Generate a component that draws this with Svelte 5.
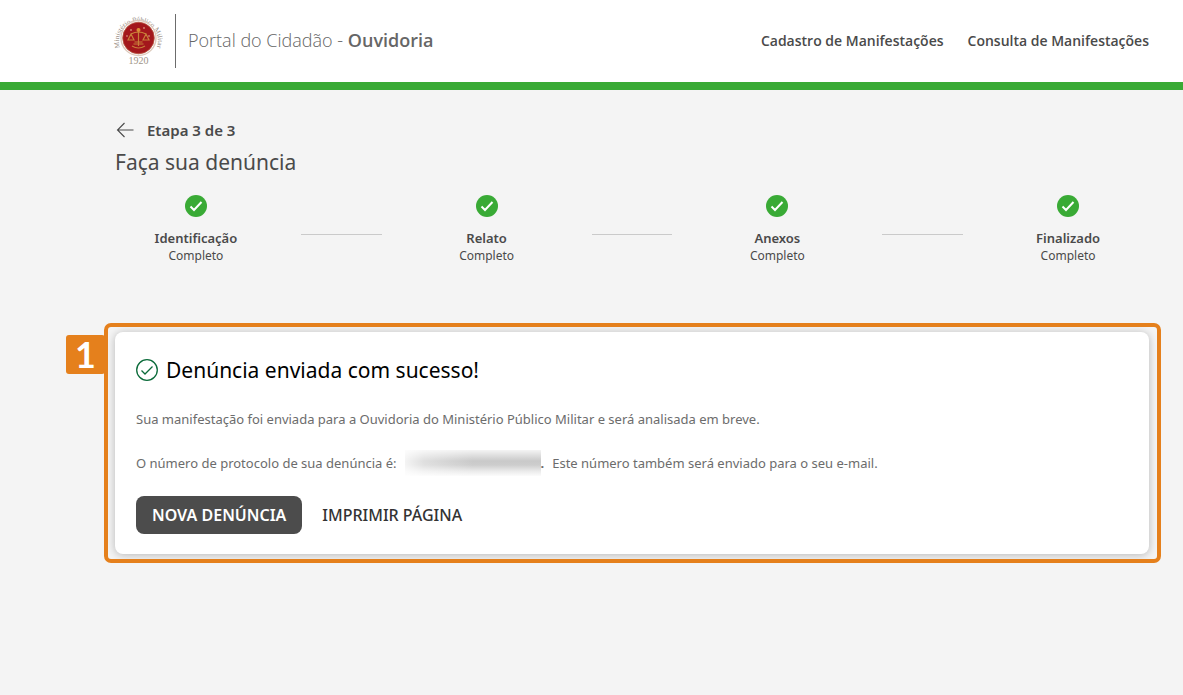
<script>
  const steps = ['Identificação', 'Relato', 'Anexos', 'Finalizado'];
  const status = 'Completo';
</script>

<header class="topbar">
  <a class="brand" href="#inicio">
    <svg class="logo" viewBox="0 0 48 54" aria-hidden="true">
      <defs>
        <path id="seal-arc" d="M5.8 35.5 A19.5 19.5 0 1 1 41.2 35.5" />
      </defs>
      <text class="seal-text"><textPath href="#seal-arc" startOffset="50%" text-anchor="middle">Ministério Público Militar</textPath></text>
      <circle cx="23.5" cy="24" r="17.5" fill="#fff" stroke="#ddc9bb" stroke-width="1.4" />
      <circle cx="23.5" cy="24" r="15.8" fill="#a3171c" stroke="#b8573f" stroke-width="0.8" />
      <g fill="none" stroke="#c9803a" stroke-width="1.2">
        <path d="M23.5 14v18M16 20q7.5-4 15 0M13 26l3-6 3 6zM28 26l3-6 3 6zM17 32q6.5 4 13 0" />
        <path d="M19.5 28h8M18.5 30h10" />
      </g>
      <circle cx="23.5" cy="16" r="2" fill="#dc8d38" />
      <g fill="#f3cfae">
        <circle cx="16" cy="16" r="0.8" />
        <circle cx="29" cy="14" r="0.8" />
        <circle cx="34" cy="22" r="0.7" />
        <circle cx="12" cy="22" r="0.7" />
      </g>
      <text class="seal-year" x="23.5" y="50" text-anchor="middle">1920</text>
    </svg>
    <span class="brand-name">Portal do Cidadão - <strong>Ouvidoria</strong></span>
  </a>
  <nav class="menu">
    <a href="#cadastro">Cadastro de Manifestações</a>
    <a href="#consulta">Consulta de Manifestações</a>
  </nav>
</header>

<main>
  <div class="stage">
    <button class="back" aria-label="Voltar">
      <svg viewBox="0 0 20 16" aria-hidden="true">
        <path d="M9.5 1l-7 7 7 7M2.5 8h16" fill="none" stroke="#4a4a4a" stroke-width="1.1" />
      </svg>
    </button>
    <span>Etapa 3 de 3</span>
  </div>
  <h1>Faça sua denúncia</h1>

  <ol class="steps">
    {#each steps as step, i}
      {#if i > 0}
        <li class="line" aria-hidden="true"></li>
      {/if}
      <li class="step">
        <svg viewBox="0 0 22 22" aria-hidden="true">
          <circle cx="11" cy="11" r="11" fill="#39aa35" />
          <path d="M5.5 11.5l3.5 3.5 7.5-8" fill="none" stroke="#fff" stroke-width="2" />
        </svg>
        <strong>{step}</strong>
        <small>{status}</small>
      </li>
    {/each}
  </ol>

  <section class="card">
    <div class="marker" aria-hidden="true"></div>
    <span class="marker-number">1</span>
    <h2>
      <svg viewBox="0 0 22 22" aria-hidden="true">
        <g fill="none" stroke="#0b6b3a" stroke-width="1.3">
          <circle cx="11" cy="11" r="10.3" />
          <path d="M5.5 11.5l3.5 3.5 7.5-7.5" />
        </g>
      </svg>
      Denúncia enviada com sucesso!
    </h2>
    <p>Sua manifestação foi enviada para a Ouvidoria do Ministério Público Militar e será analisada em breve.</p>
    <p class="protocol">
      <span>O número de protocolo de sua denúncia é:</span>
      <span class="masked"></span><b>.</b>
      <span class="notice">Este número também será enviado para o seu e-mail.</span>
    </p>
    <div class="actions">
      <button class="primary">NOVA DENÚNCIA</button>
      <button class="plain">IMPRIMIR PÁGINA</button>
    </div>
  </section>
</main>

<style>
  :global(body) {
    margin: 0;
    background: #f4f4f4;
    color: #4a4a4a;
    font-family: 'Segoe UI', 'Noto Sans', 'Open Sans', sans-serif;
  }

  a {
    color: inherit;
    text-decoration: none;
  }

  button {
    border: 0;
    background: none;
    color: inherit;
    font-family: inherit;
    cursor: pointer;
  }

  strong {
    font-weight: 600;
  }

  .topbar {
    display: flex;
    align-items: center;
    justify-content: space-between;
    height: 82px;
    padding: 0 34px 0 115px;
    border-bottom: 8px solid #39aa35;
    background: #fff;
    font-family: 'Segoe UI', 'Open Sans', sans-serif;
  }

  .brand {
    display: flex;
    align-items: center;
  }

  .logo {
    width: 48px;
    height: 54px;
    overflow: visible;
  }

  .seal-text {
    fill: #968a80;
    font: 7px 'Liberation Serif', serif;
  }

  .seal-year {
    fill: #a09588;
    font: 10px 'Liberation Serif', serif;
  }

  .brand-name {
    margin-left: 12px;
    padding: 0 0 2px 12px;
    border-left: 1px solid #6c6c6c;
    color: #666;
    font-size: 18px;
    font-weight: 300;
    line-height: 52px;
  }

  .menu {
    display: flex;
    gap: 24px;
    padding-bottom: 2px;
    font-size: 14px;
    font-weight: 600;
  }

  main {
    padding: 28px 34px 40px 115px;
  }

  .stage {
    display: flex;
    align-items: center;
    gap: 12px;
    font-size: 15px;
    font-weight: 600;
    line-height: 24px;
  }

  .back {
    display: flex;
    padding: 0;
  }

  .back svg {
    width: 20px;
    height: 16px;
  }

  h1 {
    margin: 4px 0 17px;
    font-size: 21px;
    font-weight: 400;
    line-height: 32px;
  }

  .steps {
    display: flex;
    gap: 24px;
    margin: 0 0 68px;
    padding: 0;
    list-style: none;
  }

  .step {
    display: flex;
    flex: 2 1 0;
    flex-direction: column;
    align-items: center;
    font-size: 13px;
    line-height: 20px;
  }

  .step svg {
    width: 22px;
    height: 22px;
    margin-bottom: 11px;
  }

  .step small {
    font-size: 12px;
    line-height: 16px;
  }

  .line {
    flex: 1 1 0;
    height: 1px;
    margin-top: 39px;
    background: #cacaca;
  }

  .card {
    position: relative;
    padding: 20px 21px;
    border-radius: 8px;
    background: #fff;
    box-shadow: 0 1px 8px rgba(0, 0, 0, 0.25);
  }

  .marker {
    position: absolute;
    inset: -9px -12px -9px -11px;
    border: 4px solid #e5801c;
    border-radius: 7px;
    pointer-events: none;
  }

  .marker-number {
    position: absolute;
    top: 3px;
    left: -49px;
    width: 39px;
    border-radius: 3px;
    background: #e5801c;
    color: #fff;
    font-family: Lato, sans-serif;
    font-size: 36px;
    font-weight: 700;
    line-height: 39px;
    text-align: center;
  }

  h2 {
    display: flex;
    align-items: center;
    gap: 8px;
    margin: 0 0 23px;
    color: #000;
    font-size: 21px;
    font-weight: 400;
    line-height: 36px;
  }

  h2 svg {
    width: 22px;
    height: 22px;
  }

  p {
    margin: 0 0 28px;
    color: #6c6c6c;
    font-size: 13px;
    line-height: 16px;
  }

  .protocol {
    display: flex;
    align-items: center;
    margin-bottom: 25px;
  }

  .masked {
    width: 136px;
    height: 26px;
    margin: -5px 0 -5px 8px;
    background:
      linear-gradient(90deg, #fffc, #fff6 14%, #fff0 50%),
      linear-gradient(#f4f4f4, #e0e0e0 5px, #c9c9c9 11px, #cdcdcd 15px, #eaeaea 21px, #fcfcfc);
  }

  .notice {
    margin-left: 8px;
  }

  .actions {
    display: flex;
    gap: 4px;
  }

  .actions button {
    height: 38px;
    padding: 0 16px;
    border-radius: 8px;
    font-size: 16px;
    font-weight: 600;
  }

  .actions .primary {
    background: #4c4c4c;
    color: #fff;
  }

  .actions .plain {
    color: #333;
    font-weight: 500;
  }
</style>
